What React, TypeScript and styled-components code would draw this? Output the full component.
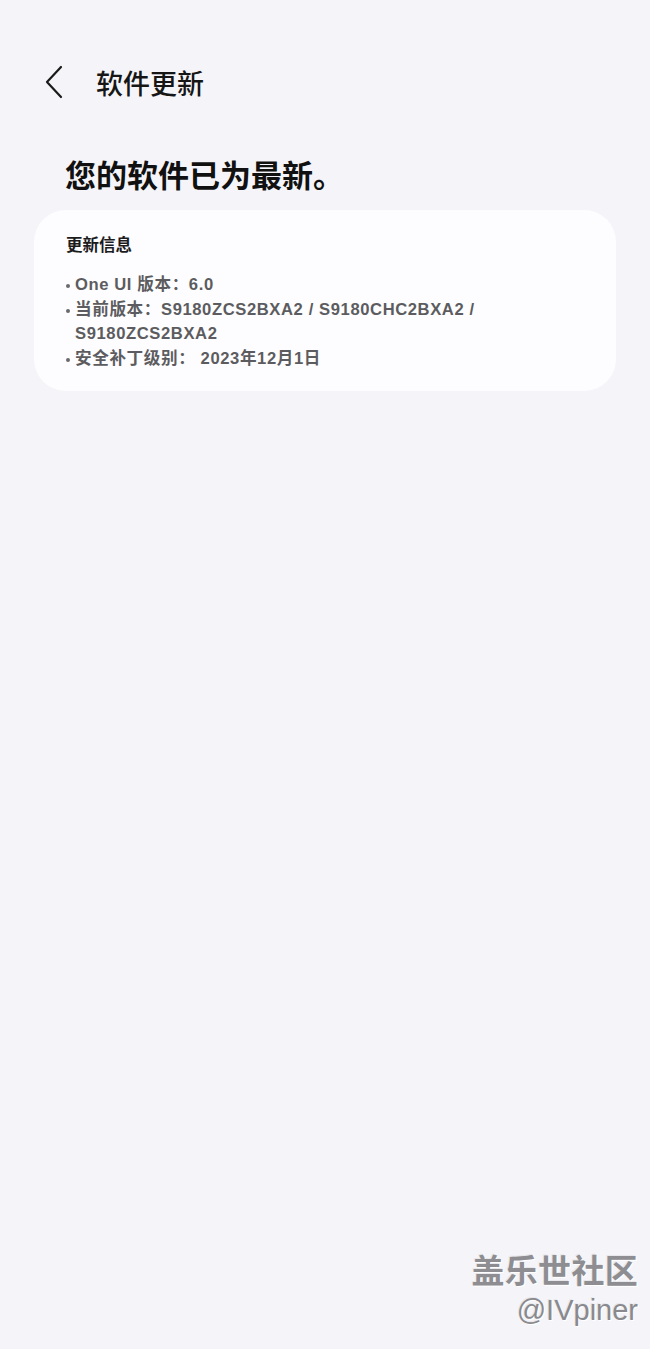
import * as React from "react";
import styled, { createGlobalStyle } from "styled-components";

const GlobalStyle = createGlobalStyle`
  html, body {
    margin: 0;
    padding: 0;
    background: #f5f5f9;
  }
  body {
    font-family: "Noto Sans CJK SC", "Noto Sans", sans-serif;
    color: #111;
  }
`;

const Page = styled.div`
  position: relative;
  width: 650px;
  min-height: 1349px;
  background: #f5f5f9;
  overflow: hidden;
`;

const TopBar = styled.div`
  display: flex;
  align-items: center;
  height: 56px;
  padding: 54px 0 0 40px;
`;

const BackButton = styled.button`
  display: flex;
  align-items: center;
  justify-content: center;
  width: 28px;
  height: 40px;
  padding: 0;
  border: none;
  background: none;
`;

const Title = styled.h1`
  margin: 0 0 0 28px;
  font-size: 27px;
  font-weight: 500;
  line-height: 1;
  color: #161616;
`;

const Headline = styled.h2`
  margin: 46px 0 0 65px;
  font-size: 31px;
  font-weight: 700;
  line-height: 36px;
  color: #111;
`;

const Card = styled.section`
  margin: 18px 34px 0 34px;
  padding: 22px 32px 20px 32px;
  background: #fdfcfe;
  border-radius: 32px;
`;

const CardTitle = styled.h3`
  margin: 0;
  font-size: 16.5px;
  font-weight: 700;
  line-height: 24px;
  color: #1c1c1e;
`;

const InfoList = styled.ul`
  list-style: none;
  margin: 17px 0 0 0;
  padding: 0;
`;

const InfoItem = styled.li`
  display: flex;
  align-items: flex-start;
  font-family: "Liberation Sans", "Noto Sans CJK SC", sans-serif;
  font-size: 16.6px;
  font-weight: 700;
  line-height: 24.6px;
  letter-spacing: 0.6px;
  color: #5c5c60;
`;

const Bullet = styled.span`
  flex: none;
  width: 4px;
  height: 4px;
  margin: 11px 5px 0 0;
  border-radius: 50%;
  background: #6a6a6e;
`;

const Watermark = styled.div`
  position: absolute;
  right: 12px;
  bottom: 22px;
  display: flex;
  flex-direction: column;
  align-items: flex-end;
  color: #8e8e92;
  text-shadow: 1px 1px 0 #ffffff, -1px -1px 0 #e8e8ec;
`;

const WatermarkBrand = styled.div`
  font-size: 33px;
  font-weight: 700;
  line-height: 40px;
  letter-spacing: 0.3px;
`;

const WatermarkUser = styled.div`
  margin-top: 4px;
  font-family: "Liberation Sans", "Noto Sans", sans-serif;
  font-size: 29px;
  line-height: 34px;
  color: #8a8a8e;
`;

const items = [
  "One UI 版本：6.0",
  "当前版本：S9180ZCS2BXA2 / S9180CHC2BXA2 / S9180ZCS2BXA2",
  "安全补丁级别： 2023年12月1日",
];

export default function App() {
  return (
    <Page>
      <GlobalStyle />
      <TopBar>
        <BackButton aria-label="返回">
          <svg width="20" height="34" viewBox="0 0 20 34" fill="none">
            <path
              d="M17 2 L3 17 L17 32"
              stroke="#1a1a1a"
              strokeWidth="2.2"
              strokeLinecap="round"
              strokeLinejoin="round"
            />
          </svg>
        </BackButton>
        <Title>软件更新</Title>
      </TopBar>
      <Headline>您的软件已为最新。</Headline>
      <Card>
        <CardTitle>更新信息</CardTitle>
        <InfoList>
          {items.map(text => (
            <InfoItem key={text}>
              <Bullet />
              <span>{text}</span>
            </InfoItem>
          ))}
        </InfoList>
      </Card>
      <Watermark>
        <WatermarkBrand>盖乐世社区</WatermarkBrand>
        <WatermarkUser>@IVpiner</WatermarkUser>
      </Watermark>
    </Page>
  );
}
